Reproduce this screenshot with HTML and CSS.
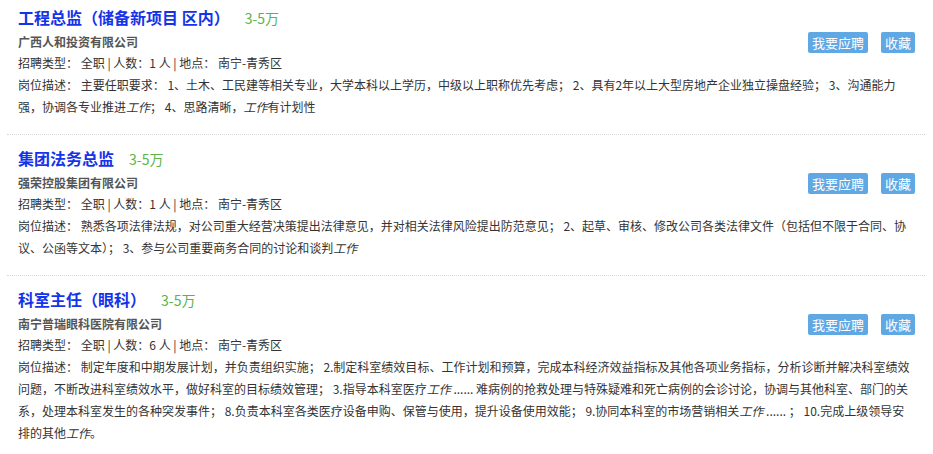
FILE: index.html
```html
<!DOCTYPE html>
<html lang="zh-CN">
<head>
  <meta charset="UTF-8" />
  <meta name="viewport" content="width=device-width, initial-scale=1" />
  <title>职位列表</title>
  <link rel="stylesheet" href="styles.css">
</head>
<body>

  <div id="jobs">
    <div class="job">
      <div class="job-title">
        <a href="#">工程总监（储备新项目 区内）</a>
        <span class="salary">3-5万</span>
      </div>
      <div class="job-company">
        <span class="company">广西人和投资有限公司</span>
        <div class="actions">
          <button>我要应聘</button>
          <button>收藏</button>
        </div>
      </div>
      <p class="meta">招聘类型： 全职 | 人数：1 人 | 地点： 南宁-青秀区</p>
      <p class="desc">岗位描述： 主要任职要求： 1、土木、工民建等相关专业，大学本科以上学历，中级以上职称优先考虑； 2、具有2年以上大型房地产企业独立操盘经验； 3、沟通能力强，协调各专业推进<em>工作</em>； 4、思路清晰，<em>工作</em>有计划性</p>
    </div>

    <div class="job">
      <div class="job-title">
        <a href="#">集团法务总监</a>
        <span class="salary">3-5万</span>
      </div>
      <div class="job-company">
        <span class="company">强荣控股集团有限公司</span>
        <div class="actions">
          <button>我要应聘</button>
          <button>收藏</button>
        </div>
      </div>
      <p class="meta">招聘类型： 全职 | 人数：1 人 | 地点： 南宁-青秀区</p>
      <p class="desc">岗位描述： 熟悉各项法律法规，对公司重大经营决策提出法律意见，并对相关法律风险提出防范意见； 2、起草、审核、修改公司各类法律文件（包括但不限于合同、协议、公函等文本）； 3、参与公司重要商务合同的讨论和谈判<em>工作</em></p>
    </div>

    <div class="job">
      <div class="job-title">
        <a href="#">科室主任（眼科）</a>
        <span class="salary">3-5万</span>
      </div>
      <div class="job-company">
        <span class="company">南宁普瑞眼科医院有限公司</span>
        <div class="actions">
          <button>我要应聘</button>
          <button>收藏</button>
        </div>
      </div>
      <p class="meta">招聘类型： 全职 | 人数：6 人 | 地点： 南宁-青秀区</p>
      <p class="desc">岗位描述： 制定年度和中期发展计划，并负责组织实施； 2.制定科室绩效目标、工作计划和预算，完成本科经济效益指标及其他各项业务指标，分析诊断并解决科室绩效问题，不断改进科室绩效水平，做好科室的目标绩效管理； 3.指导本科室医疗<em>工作</em> ...... 难病例的抢救处理与特殊疑难和死亡病例的会诊讨论，协调与其他科室、部门的关系，处理本科室发生的各种突发事件； 8.负责本科室各类医疗设备申购、保管与使用，提升设备使用效能； 9.协同本科室的市场营销相关<em>工作</em> ...... ； 10.完成上级领导安排的其他<em>工作</em>。</p>
    </div>
  </div>

</body>
</html>
```

FILE: styles.css
```css
body {
  margin: 0;
  font-family: "Microsoft YaHei", "Noto Sans CJK SC", sans-serif;
  color: #333;
  background: #fff;
}

#jobs {
  margin: 0 8px 0 7px;
}

.job {
  padding: 11px 10px 16px 11px;
  border-bottom: 1px dotted #d6d6d6;
}

.job:first-child {
  padding-top: 5px;
}

.job-title {
  display: flex;
  align-items: baseline;
  gap: 15px;
  line-height: 24px;
}

.job-title a {
  font-size: 16px;
  font-weight: bold;
  color: #1533e8;
  text-decoration: none;
}

.salary {
  font-size: 14px;
  color: #5bb548;
}

.job-company {
  display: flex;
  justify-content: space-between;
  align-items: center;
  height: 22px;
}

.company {
  font-size: 12px;
  font-weight: bold;
  color: #555;
}

.actions {
  display: flex;
  gap: 13px;
  margin-top: 3px;
}

.actions button {
  height: 21px;
  padding: 0 4px;
  border: none;
  border-radius: 2px;
  background-color: #60a8e4;
  color: #fff;
  font-family: inherit;
  font-size: 13px;
  line-height: 21px;
  cursor: pointer;
}

.meta,
.desc {
  margin: 0;
  font-size: 12px;
  line-height: 22px;
}

.desc em {
  font-style: italic;
}
```
